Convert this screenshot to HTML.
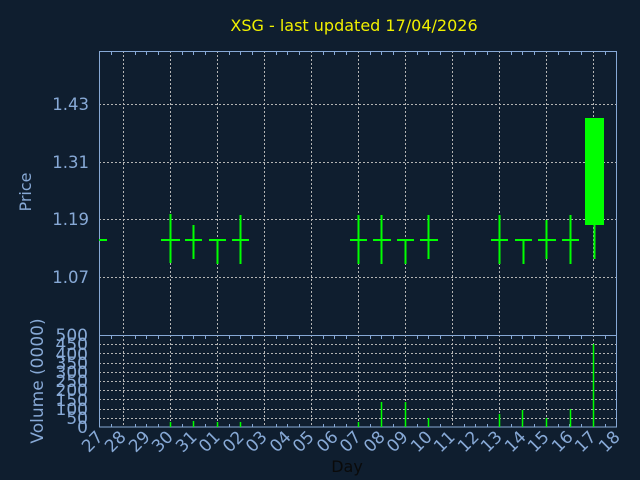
<!DOCTYPE html>
<html><head><style>body{margin:0;background:#0f1e2f}svg{display:block}</style></head><body>
<svg width="640" height="480" xmlns="http://www.w3.org/2000/svg" font-family="DejaVu Sans, sans-serif">
<rect width="640" height="480" fill="#0f1e2f"/>
<text x="354" y="31" fill="#f0f000" font-size="16" text-anchor="middle">XSG - last updated 17/04/2026</text>
<g stroke="#b4b4b4" stroke-dasharray="2,2" stroke-width="1">
<path d="M99 104.5H617M99 162.5H617M99 219.5H617M99 277.5H617"/>
<path d="M99 344.5H617M99 353.5H617M99 363.5H617M99 372.5H617M99 381.5H617M99 390.5H617M99 399.5H617M99 409.5H617M99 418.5H617"/>
<path d="M123.5 51V427M170.5 51V427M217.5 51V427M264.5 51V427M311.5 51V427M358.5 51V427M405.5 51V427M452.5 51V427M499.5 51V427M546.5 51V427M593.5 51V427"/>
</g>
<g stroke="#87a9d6" fill="none">
<rect x="99.5" y="51.5" width="517" height="375.5"/>
<path d="M99 335.5H617"/>
<path d="M111.5 52v3M135.5 52v3M146.5 52v3M158.5 52v3M182.5 52v3M193.5 52v3M205.5 52v3M229.5 52v3M240.5 52v3M252.5 52v3M276.5 52v3M287.5 52v3M299.5 52v3M323.5 52v3M334.5 52v3M346.5 52v3M370.5 52v3M381.5 52v3M393.5 52v3M417.5 52v3M428.5 52v3M440.5 52v3M464.5 52v3M475.5 52v3M487.5 52v3M511.5 52v3M522.5 52v3M534.5 52v3M558.5 52v3M569.5 52v3M581.5 52v3M605.5 52v3"/>
<path d="M111.5 427v-3M135.5 427v-3M146.5 427v-3M158.5 427v-3M182.5 427v-3M193.5 427v-3M205.5 427v-3M229.5 427v-3M240.5 427v-3M252.5 427v-3M276.5 427v-3M287.5 427v-3M299.5 427v-3M323.5 427v-3M334.5 427v-3M346.5 427v-3M370.5 427v-3M381.5 427v-3M393.5 427v-3M417.5 427v-3M428.5 427v-3M440.5 427v-3M464.5 427v-3M475.5 427v-3M487.5 427v-3M511.5 427v-3M522.5 427v-3M534.5 427v-3M558.5 427v-3M569.5 427v-3M581.5 427v-3M605.5 427v-3"/>
<path d="M111.5 336v3M135.5 336v3M146.5 336v3M158.5 336v3M182.5 336v3M193.5 336v3M205.5 336v3M229.5 336v3M240.5 336v3M252.5 336v3M276.5 336v3M287.5 336v3M299.5 336v3M323.5 336v3M334.5 336v3M346.5 336v3M370.5 336v3M381.5 336v3M393.5 336v3M417.5 336v3M428.5 336v3M440.5 336v3M464.5 336v3M475.5 336v3M487.5 336v3M511.5 336v3M522.5 336v3M534.5 336v3M558.5 336v3M569.5 336v3M581.5 336v3M605.5 336v3"/>
</g>
<g fill="#87a9d6" font-size="16.5" text-anchor="end">
<text x="89" y="110">1.43</text><text x="89" y="168">1.31</text><text x="89" y="225">1.19</text><text x="89" y="283">1.07</text>
</g>
<g fill="#87a9d6" font-size="17" text-anchor="end">
<text x="88" y="341">500</text><text x="88" y="350">450</text><text x="88" y="360">400</text><text x="88" y="369">350</text><text x="88" y="378">300</text><text x="88" y="387">250</text><text x="88" y="396">200</text><text x="88" y="406">150</text><text x="88" y="415">100</text><text x="88" y="424">50</text><text x="88" y="433">0</text>
</g>
<text transform="translate(31,192) rotate(-90)" fill="#87a9d6" font-size="16" text-anchor="middle">Price</text>
<text transform="translate(43,381) rotate(-90)" fill="#87a9d6" font-size="17" text-anchor="middle">Volume (0000)</text>
<text x="347" y="472" fill="#0a0a0a" font-size="16" text-anchor="middle">Day</text>
<g fill="#87a9d6" font-size="17" text-anchor="end">
<text transform="translate(104,438) rotate(-45)">27</text>
<text transform="translate(127,438) rotate(-45)">28</text>
<text transform="translate(151,438) rotate(-45)">29</text>
<text transform="translate(174,438) rotate(-45)">30</text>
<text transform="translate(198,438) rotate(-45)">31</text>
<text transform="translate(221,438) rotate(-45)">01</text>
<text transform="translate(245,438) rotate(-45)">02</text>
<text transform="translate(268,438) rotate(-45)">03</text>
<text transform="translate(292,438) rotate(-45)">04</text>
<text transform="translate(315,438) rotate(-45)">05</text>
<text transform="translate(339,438) rotate(-45)">06</text>
<text transform="translate(362,438) rotate(-45)">07</text>
<text transform="translate(386,438) rotate(-45)">08</text>
<text transform="translate(409,438) rotate(-45)">09</text>
<text transform="translate(433,438) rotate(-45)">10</text>
<text transform="translate(456,438) rotate(-45)">11</text>
<text transform="translate(480,438) rotate(-45)">12</text>
<text transform="translate(503,438) rotate(-45)">13</text>
<text transform="translate(527,438) rotate(-45)">14</text>
<text transform="translate(550,438) rotate(-45)">15</text>
<text transform="translate(574,438) rotate(-45)">16</text>
<text transform="translate(597,438) rotate(-45)">17</text>
<text transform="translate(621,438) rotate(-45)">18</text>
</g>
<g stroke="#00ff00" stroke-width="2">
<path d="M99 240H107"/>
<path d="M161 240H180M170.5 214V263"/>
<path d="M185 240H202M193.5 225V259"/>
<path d="M209 240H226M217.5 240V264"/>
<path d="M232 240H249M240.5 215V264"/>
<path d="M350 240H367M358.5 215V264"/>
<path d="M373 240H391M381.5 215V264"/>
<path d="M397 240H414M405.5 240V264"/>
<path d="M420 240H438M428.5 215V259"/>
<path d="M491 240H508M499.5 215V264"/>
<path d="M515 240H532M523.5 240V264"/>
<path d="M538 240H556M546.5 220V259"/>
<path d="M562 240H579M570.5 215V264"/>
<path d="M594.5 225V259"/>
</g>
<rect x="585" y="118" width="19" height="107" fill="#00ff00"/>
<g stroke="#00ff00" stroke-width="1.5">
<path d="M170.5 422V427M193.5 421V427M217.5 422V427M240.5 422V427M358.5 422V427M381.5 402V427M405.5 402V427M428.5 418V427M499.5 414V427M522.5 410V427M546.5 418V427M570.5 409V427M593.5 344V427"/>
</g>
</svg>
</body></html>
